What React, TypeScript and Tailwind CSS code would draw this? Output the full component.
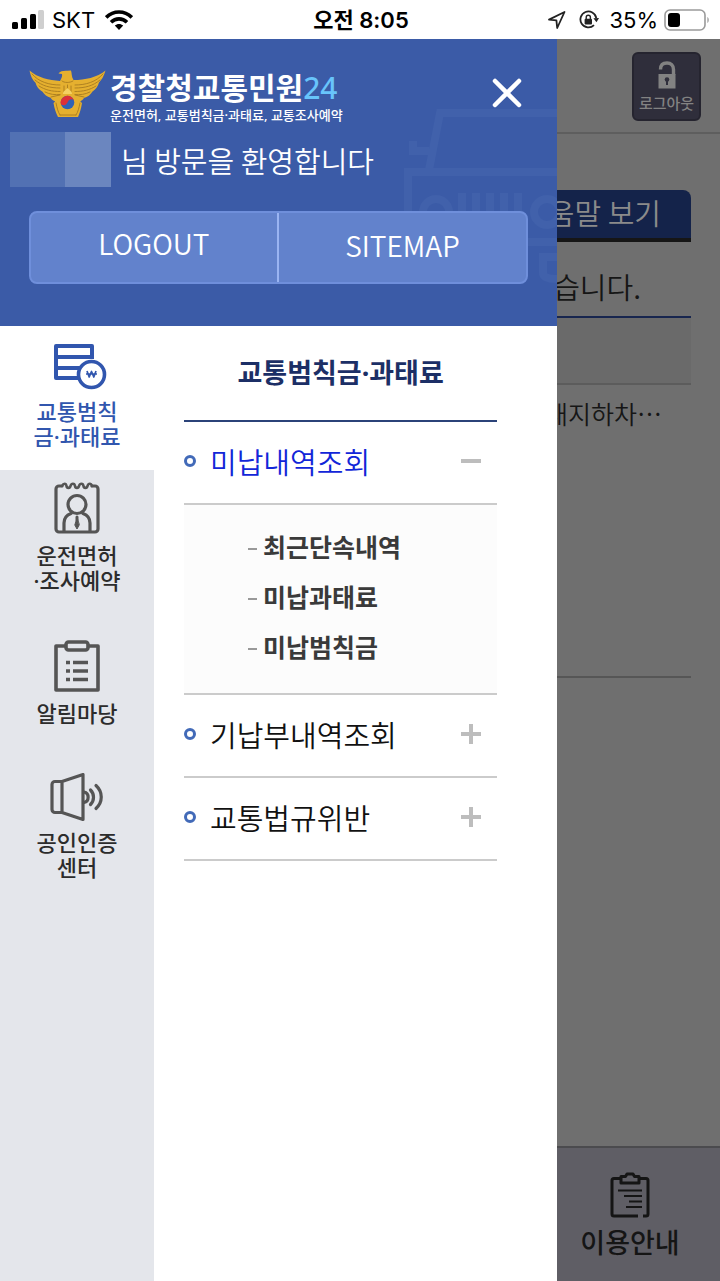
import { useState, type ReactNode } from "react";

function StatusBar() {
  return (
    <div className="grid h-[39px] shrink-0 grid-cols-3 items-center bg-white pl-3 pr-2.5 font-['Inter','Noto_Sans_CJK_KR',sans-serif] text-black">
      <div className="flex items-center gap-2">
        <svg className="h-5 w-8" viewBox="0 0 32 20" aria-hidden="true">
          <rect x="0" y="12" width="6" height="7" rx="1.5" />
          <rect x="9" y="8" width="6" height="11" rx="1.5" />
          <rect x="18" y="4" width="6" height="15" rx="1.5" />
          <rect x="26" y="0" width="6" height="19" rx="1.5" fill="#cfcfcf" />
        </svg>
        <span className="text-[22px] leading-6">SKT</span>
        <svg className="ml-0.5 h-5 w-7" viewBox="0 0 28 20" fill="none" stroke="#000" strokeWidth="3.6" aria-hidden="true">
          <path d="M1.2 7.4C8.5 .2 19.5 .2 26.8 7.4" />
          <path d="M6 12.2c4.6-4.4 11.4-4.4 16 0" />
          <path d="M9.8 15.6c2.4-2.2 6-2.2 8.4 0L14 20z" fill="#000" stroke="none" />
        </svg>
      </div>
      <div className="text-center text-[22px] font-semibold leading-6">오전 8:05</div>
      <div className="flex items-center justify-end gap-2">
        <svg className="h-5 w-5" viewBox="0 0 20 20" fill="none" stroke="#222" strokeWidth="1.8" strokeLinejoin="round" aria-hidden="true">
          <path d="M2 9.6 17.5 2 10.2 18 9.4 10.4z" />
        </svg>
        <svg className="ml-1 h-5 w-5" viewBox="0 0 20 20" fill="none" stroke="#222" strokeWidth="1.8" aria-hidden="true">
          <path d="M17.300 8A8 8 0 1 0 15 15.200" />
          <path d="m14.400 8.200 5.600-.200-2.500 4.200z" fill="#222" stroke="none" />
          <rect x="5.600" y="8.800" width="7.400" height="5.600" rx="1" fill="#222" stroke="none" />
          <path d="M7.200 9V7.400a2.100 2.100 0 0 1 4.200 0V9" strokeWidth="1.4" />
        </svg>
        <span className="ml-0.5 text-[22px] leading-6">35%</span>
        <svg className="-ml-0.5 h-[22px] w-[46px]" viewBox="0 0 46 22" aria-hidden="true">
          <rect x="1" y="1" width="40" height="20" rx="5" fill="none" stroke="#9a9a9a" strokeWidth="1.6" />
          <rect x="4" y="4" width="12" height="14" rx="3" />
          <path d="M43.4 8v6c1.8-1 1.8-5 0-6z" fill="#9a9a9a" />
        </svg>
      </div>
    </div>
  );
}

function Emblem() {
  return (
    <svg className="h-[50px] w-[77px] shrink-0" viewBox="0 0 77 50" aria-hidden="true">
      <path
        d="M.5 1.5C9 9 20 11 31 12c1.500-3 2.500-4.500 2-7l-3.500-.6C31 2 35 1.500 38.500 1.800l3.500-.4c1 3 .3 6 2.500 9.600C56 11 68 8.500 76.500 1.500 75 7 72.500 11 70 13.500c-1 4-3.500 7-6.500 9-2 3.500-5 5.500-8.500 6.500-1 1.800-3 2.800-3.700 3.400L53 34c-1 6-2.200 10-4 14H29c-2-4-3.500-8-4.500-14l1.700-1.600c-2-.6-3.500-1.800-4.700-3.600-3.500-1-6-3-8-6-3.500-2-6-5-7-9C3.500 11 1.500 7 .5 1.500z"
        fill="#e5b02f"
      />
      <g fill="none" stroke="#a87c20" strokeWidth=".9" strokeLinecap="round">
        <path d="M3 5c7 8 17 11 28 11M6 11c7 6 15 8 25 8M10 17c6 4 13 5.500 21 5.500M16 23c5 2.500 10 3 15 2.500M22 28l9-2" />
        <path d="M74 5c-7 8-17 11-28 11M71 11c-7 6-15 8-25 8M67 17c-6 4-13 5.500-21 5.500M61 23c-5 2.500-10 3-15 2.500M55 28l-9-2" />
        <path d="M33 12c2 2 8 2 11 0M35 17v6m3.500-7v7m3.500-6v6" />
        <path d="M27 34c1 5 2 9 4 12m20-12c-1 5-2 9-4 12M31 46h16" />
      </g>
      <path d="M34 25c0-3 2-3 4.500-6 2.500 3 4.500 3 4.500 6z" fill="#f4d061" />
      <circle cx="38.500" cy="33.500" r="6.800" fill="#2f62b5" />
      <path d="M31.900 35.200a6.800 6.800 0 1 1 13.200-3.400c-2.400-2.600-5-1.500-6.600 1.700s-4.800 3.600-6.600 1.700z" fill="#dc3038" />
    </svg>
  );
}

function CarWatermark() {
  return (
    <svg className="pointer-events-none absolute right-0 top-[68px] h-[182px] w-[154px]" viewBox="0 0 154 182" fill="none" stroke="#4161ab" strokeWidth="8" aria-hidden="true">
      <path d="M154 6H37L26 63M154 65H5v70h149M26 44H10V34" />
      <circle cx="33" cy="105" r="13" />
      <path d="M59 86v30M73 86v30M87 86v30M101 86v30M115 86v30" />
      <circle cx="144" cy="105" r="13" />
      <path d="M24 140v32h16v-32M154 150h-14v16q0 6 14 6" />
    </svg>
  );
}

function FineIcon() {
  return (
    <svg className="h-[46px] w-[60px]" viewBox="-6 0 60 46" fill="none" stroke="currentColor" strokeWidth="4" strokeLinejoin="round" aria-hidden="true">
      <path d="M26 34H3V2h36v13M3 13h36M3 24h25" />
      <circle cx="38.500" cy="30.500" r="13" fill="#fff" strokeWidth="3.600" />
      <path d="m34 27 2.200 6 2.300-5.500 2.300 5.500L43 27M33 30h11" strokeWidth="1.700" />
    </svg>
  );
}

function LicenseIcon() {
  return (
    <svg className="h-[52px] w-[46px]" viewBox="0 0 46 52" fill="none" stroke="#555" strokeWidth="3.200" strokeLinejoin="round" strokeLinecap="round" aria-hidden="true">
      <path d="M8 4H5a3 3 0 0 0-3 3v40a3 3 0 0 0 3 3h36a3 3 0 0 0 3-3V7a3 3 0 0 0-3-3h-3" />
      <path d="M8 4c1.500-3 4-3 4.500 0 .3 2.500 3.500 2.500 4 0 1-3 4-3 4.500 0 .3 2.500 3.500 2.500 4 0 1-3 4-3 4.500 0 .3 2.500 3.500 2.500 4 0 1-3 3.500-3 4.500 0" strokeWidth="2.600" />
      <circle cx="23" cy="22.500" r="9" />
      <path d="M10 49V41c0-5 3-8 7-9.500M36 49V41c0-5-3-8-7-9.500" />
      <path d="M23 35v3" strokeWidth="3" />
      <path d="m23 36-2.200 7 2.200 4 2.200-4z" fill="#555" strokeWidth="1" />
    </svg>
  );
}

function NoticeIcon() {
  return (
    <svg className="h-[52px] w-[46px]" viewBox="0 0 46 52" fill="none" stroke="#555" strokeWidth="3.600" strokeLinejoin="round" aria-hidden="true">
      <path d="M11 6H2v44h42V6h-9" />
      <rect x="12" y="2" width="22" height="8" rx="2.500" />
      <path d="M12 22.500h4m3 0h15M12 31h4m3 0h15M12 39.500h4m3 0h15" />
    </svg>
  );
}

function SpeakerIcon() {
  return (
    <svg className="h-12 w-[54px]" viewBox="0 0 54 48" fill="none" stroke="#555" strokeWidth="3.200" strokeLinejoin="round" strokeLinecap="round" aria-hidden="true">
      <path d="M12 8.500 33 1.600v44.800L12 39.500H5a3 3 0 0 1-3-3v-25a3 3 0 0 1 3-3zM12 8.500v31" />
      <path d="M34 19c5.500 1 5.500 9.500 0 10.500M40.500 17c4 4 4 10.500 0 14.500M46 12.500c7 6.500 7 16.500 0 23" />
    </svg>
  );
}

function GuideIcon() {
  return (
    <svg className="h-[46px] w-10" viewBox="0 0 40 46" fill="none" stroke="#151515" strokeWidth="3" strokeLinejoin="round" aria-hidden="true">
      <path d="M11 6.500H4a2 2 0 0 0-2 2V42a2 2 0 0 0 2 2h24M29 6.500h7a2 2 0 0 1 2 2V42a2 2 0 0 1-2 2h-3" />
      <path d="M11 4.500h4.500L17 2h6l1.500 2.500H29V11H11z" />
      <path d="M8 18.500h24M14 24h18M19 29.500h13M16 35h16" strokeWidth="2.200" />
    </svg>
  );
}

interface Tab {
  id: string;
  label: string;
  icon: ReactNode;
}

const tabs: Tab[] = [
  { id: "fine", label: "교통범칙\n금·과태료", icon: <FineIcon /> },
  { id: "license", label: "운전면허\n·조사예약", icon: <LicenseIcon /> },
  { id: "notice", label: "알림마당", icon: <NoticeIcon /> },
  { id: "cert", label: "공인인증\n센터", icon: <SpeakerIcon /> },
];

const sections = [
  { title: "미납내역조회", children: ["최근단속내역", "미납과태료", "미납범칙금"] },
  { title: "기납부내역조회", children: [] },
  { title: "교통법규위반", children: [] },
];

function DrawerHeader() {
  return (
    <header className="relative h-[287px] shrink-0 bg-[#3b5ba7] pt-[30px] text-white">
      <CarWatermark />
      <div className="relative flex items-start pl-[29px] pr-[34px]">
        <Emblem />
        <div className="ml-1 flex-1 whitespace-nowrap font-['Noto_Sans','Noto_Sans_CJK_KR',sans-serif]">
          <div className="text-[30px] font-bold leading-[38px]">
            경찰청교통민원<span className="font-medium text-[#68c4fb]">24</span>
          </div>
          <div className="text-[13px] font-medium leading-4">운전면허, 교통범칙금·과태료, 교통조사예약</div>
        </div>
        <button type="button" aria-label="닫기" className="mt-2 flex size-8 items-center justify-center">
          <svg className="size-8" viewBox="0 0 32 32" stroke="#fff" strokeWidth="4.500" strokeLinecap="round" aria-hidden="true">
            <path d="M4 4 28 28M28 4 4 28" />
          </svg>
        </button>
      </div>
      <div className="relative mt-[9px] flex items-center pl-2.5">
        <span className="h-[55px] w-[55px] bg-[#5271b3]" />
        <span className="h-[55px] w-[46px] bg-[#6b86bf]" />
        <p className="ml-2.5 whitespace-nowrap text-[29px] font-[350] leading-10">님 방문을 환영합니다</p>
      </div>
      <div className="relative ml-[29px] mr-[29px] mt-6 grid h-[73px] grid-cols-2 overflow-hidden rounded-lg border-2 border-[#6f8fdb] bg-[#6282cc] text-[28px] font-[350]">
        <button type="button" className="border-r-2 border-[#9ab4f2] pb-2.5">LOGOUT</button>
        <button type="button" className="pb-1.5">SITEMAP</button>
      </div>
    </header>
  );
}

function Drawer() {
  const [active, setActive] = useState("fine");
  const [open, setOpen] = useState(0);
  return (
    <aside className="absolute inset-y-0 left-0 flex w-[77.4%] flex-col bg-white">
      <DrawerHeader />
      <div className="flex flex-1">
        <nav className="flex w-[154px] shrink-0 flex-col bg-[#e4e6eb] font-['Noto_Sans','Noto_Sans_CJK_KR',sans-serif]">
          {tabs.map((tab) => (
            <button
              key={tab.id}
              type="button"
              onClick={() => setActive(tab.id)}
              className={
                tab.id === active
                  ? "flex flex-col items-center gap-[9px] whitespace-pre-line bg-white pb-[21px] pt-[18px] text-[22px] font-medium leading-[25px] text-[#3156ae]"
                  : "flex flex-col items-center gap-[9px] whitespace-pre-line pb-[35px] pt-3 text-[22px] font-medium leading-[25px] text-[#2c2c2c]"
              }
            >
              {tab.icon}
              {tab.label}
            </button>
          ))}
        </nav>
        <div className="min-w-0 flex-1 pl-[30px] pr-[60px]">
          <h2 className="border-b-2 border-[#2b4379] pb-[27px] pt-[27px] text-center font-['Noto_Sans','Noto_Sans_CJK_KR',sans-serif] text-[27px] font-bold leading-10 text-[#1c2f66]">
            교통범칙금·과태료
          </h2>
          <ul>
            {sections.map((section, i) => (
              <li key={section.title}>
                <button
                  type="button"
                  aria-expanded={open === i}
                  onClick={() => setOpen(open === i ? -1 : i)}
                  className="flex h-[83px] w-full items-center border-b-2 border-[#cbcbcb] pb-1 pr-4 text-left"
                >
                  <span className="size-3 rounded-full border-[3px] border-[#426ab8]" />
                  <span className={open === i ? "ml-3.5 flex-1 whitespace-nowrap text-[29px] font-[350] leading-10 text-[#1226d8]" : "ml-3.5 flex-1 whitespace-nowrap text-[29px] font-[350] leading-10 text-[#111]"}>
                    {section.title}
                  </span>
                  <svg className="size-5" viewBox="0 0 20 20" stroke="#bdbdbd" strokeWidth="4" aria-hidden="true">
                    <path d={open === i ? "M0 10h20" : "M0 10h20M10 0v20"} />
                  </svg>
                </button>
                {open === i && section.children.length > 0 && (
                  <ul className="border-b-2 border-[#cbcbcb] bg-[#fcfcfc] pb-[21px] pl-16 pt-[17px]">
                    {section.children.map((child) => (
                      <li key={child} className="flex h-[50px] items-center gap-1.5 text-[25px] font-bold text-[#3a3a3a]">
                        <span className="mt-1 h-0.5 w-[9px] bg-[#999]" />
                        <a href="#">{child}</a>
                      </li>
                    ))}
                  </ul>
                )}
              </li>
            ))}
          </ul>
        </div>
      </div>
    </aside>
  );
}

function Page() {
  return (
    <main className="flex flex-1 flex-col bg-[#6f6f6f]">
      <div className="flex h-[95px] items-start justify-end border-b-2 border-[#5e5e5e] pr-[19px] pt-[13px]">
        <button type="button" className="flex h-[69px] w-[69px] flex-col items-center rounded-md border-2 border-[#25242f] bg-[#2f2e3b] pt-[7px] text-[#828282]">
          <svg className="h-7 w-5" viewBox="0 0 20 28" fill="none" aria-hidden="true">
            <path d="M3.500 8.500C3.500 4 6 2 10 2s6.500 2.500 6.500 6.500V14" stroke="#828282" strokeWidth="3.400" />
            <path d="M1.500 13h17v14.500h-17z" fill="#828282" />
            <circle cx="10" cy="18.500" r="2.300" fill="#2f2e3b" />
            <path d="M10 19v5" stroke="#2f2e3b" strokeWidth="2" />
          </svg>
          <span className="mt-1 whitespace-nowrap text-[15px] font-medium leading-5">로그아웃</span>
        </button>
      </div>
      <div className="pl-[29px] pr-[29px] pt-14">
        <div className="flex justify-end rounded-tr-lg border-b-4 border-[#161616] bg-[#14234a] pb-1 pr-[30px] text-[29px] font-[350] leading-[44px] text-[#8b8b8b]">
          움말 보기
        </div>
        <p className="border-b-2 border-[#18264f] pb-2 pr-[50px] pt-[22px] text-right text-[29px] font-[350] leading-[44px] text-[#161616]">습니다.</p>
        <div className="h-[67px] border-b-2 border-[#5c5c5c] bg-[#6a6a6a]" />
        <p className="h-[293px] border-b-2 border-[#565656] pr-[29px] pt-2 text-right text-[25px] font-[350] leading-10 text-[#161616]">내지하차…</p>
      </div>
      <nav className="mt-auto grid h-[135px] grid-cols-4 border-t-2 border-[#4b4b4e] bg-[#5f5e65]">
        <a href="#" className="col-start-4 flex flex-col items-center pt-6 text-[27px] font-medium leading-10 text-[#151515]">
          <GuideIcon />
          <span className="mt-1">이용안내</span>
        </a>
      </nav>
    </main>
  );
}

export default function App() {
  return (
    <div className="flex min-h-screen flex-col font-['Noto_Sans_CJK_KR','Noto_Sans',sans-serif]">
      <StatusBar />
      <div className="relative flex flex-1 flex-col">
        <Page />
        <Drawer />
      </div>
    </div>
  );
}
